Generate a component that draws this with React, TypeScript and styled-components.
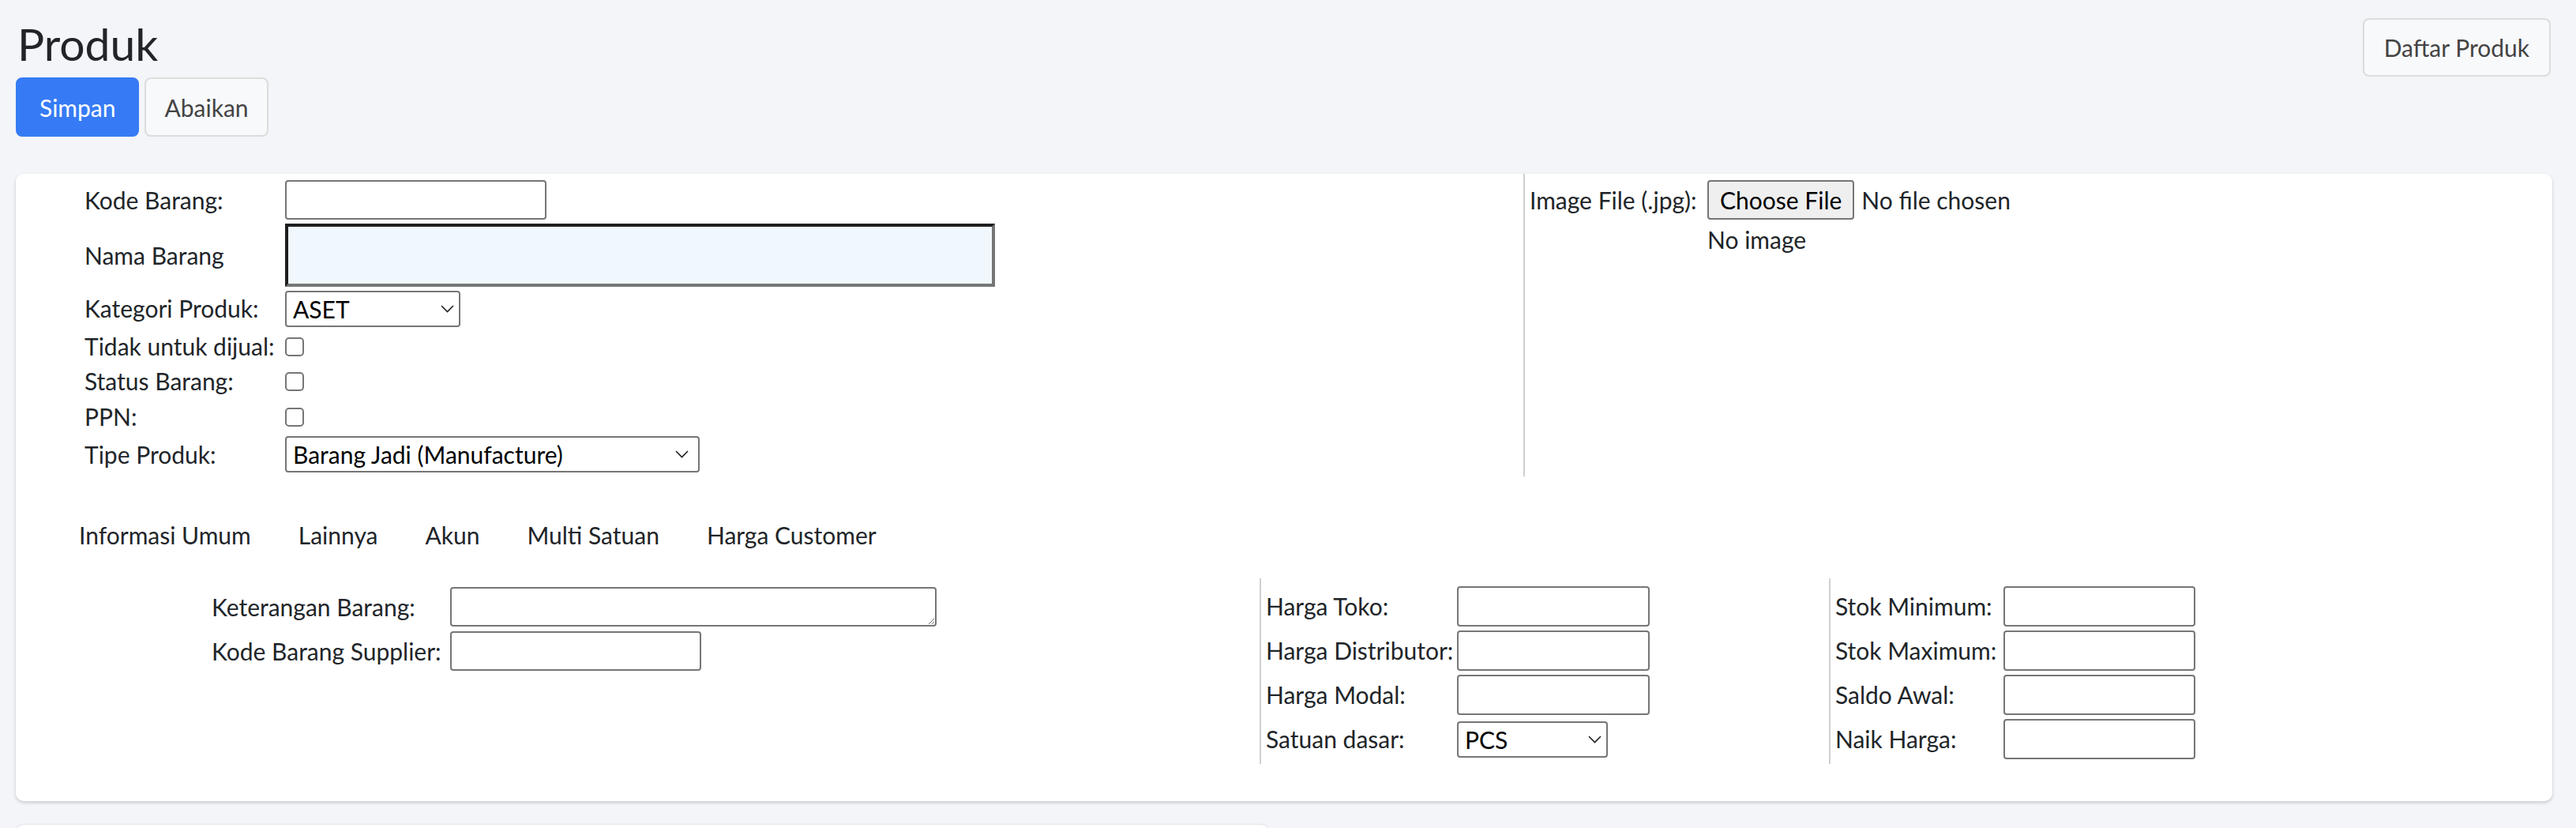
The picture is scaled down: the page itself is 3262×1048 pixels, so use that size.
import * as React from 'react';
import styled, { createGlobalStyle } from 'styled-components';

const GlobalStyle = createGlobalStyle`
  html, body {
    margin: 0;
    padding: 0;
    background: #f4f5f9;
    font-family: Lato, "Noto Sans", sans-serif;
    font-size: 30px;
    color: #212529;
  }
  * { box-sizing: border-box; }
`;

const Page = styled.div`
  padding: 0 30px 0 20px;
  height: 1048px;
  overflow: hidden;
`;

const Header = styled.div`
  display: flex;
  justify-content: space-between;
  align-items: flex-start;
`;

const Title = styled.h2`
  margin: 20px 0 0 2px;
  font-size: 57px;
  font-weight: 400;
  line-height: 71px;
`;

const ButtonRow = styled.div`
  display: flex;
  gap: 7px;
  margin-top: 7px;
`;

const Btn = styled.button<{ $primary?: boolean }>`
  height: 75px;
  padding: 0 ${ p => p.$primary ? 28 : 23 }px;
  font: inherit;
  border-radius: 8px;
  border: 2px solid ${ p => p.$primary ? '#367bf5' : '#dcdcdc' };
  background: ${ p => p.$primary ? '#367bf5' : '#f8f9fb' };
  color: ${ p => p.$primary ? '#fff' : '#444' };
`;

const TopBtn = styled(Btn)`
  margin: 23px 2px 0 0;
  height: 74px;
  padding: 0 25px;
`;

const Card = styled.div`
  margin-top: 47px;
  background: #fff;
  border-radius: 10px;
  box-shadow: 0 2px 4px rgba(0, 0, 0, 0.18);
  padding-bottom: 47px;
`;

const NextCard = styled.div`
  margin-top: 30px;
  width: 1587px;
  height: 60px;
  background: #fff;
  border-radius: 10px;
  box-shadow: 0 0 3px rgba(0, 0, 0, 0.15);
`;

const TopSection = styled.div`
  display: grid;
  grid-template-columns: 1909px 1fr;
`;

const MainFields = styled.div`
  padding: 5px 0 0 87px;
`;

const ImageFields = styled.div`
  border-left: 2px solid #d0d0d0;
  padding: 5px 0 0 6px;
  height: 383px;
`;

const FormRow = styled.div<{ $label: number; $h: number }>`
  display: grid;
  grid-template-columns: ${ p => p.$label }px 1fr;
  align-items: center;
  height: ${ p => p.$h }px;
  white-space: nowrap;
`;

const Label = styled.span`
  line-height: 45px;
`;

const TextInput = styled.input<{ $w: number; $h?: number }>`
  width: ${ p => p.$w }px;
  height: ${ p => p.$h ?? 50 }px;
  border: 2px solid #767676;
  border-radius: 4px;
  font: inherit;
  background: #fff;
`;

const NameInput = styled.input`
  width: 899px;
  height: 80px;
  border: 4px solid;
  border-color: #1f1f1f #767676 #767676 #1f1f1f;
  background: #f0f7fd;
  font: inherit;
`;

const Check = styled.input`
  appearance: none;
  width: 24px;
  height: 24px;
  margin: 0;
  border: 2px solid #767676;
  border-radius: 5px;
  background: #fff;
`;

const SelectWrap = styled.div<{ $w: number; $h: number }>`
  position: relative;
  width: ${ p => p.$w }px;
  height: ${ p => p.$h }px;

  svg {
    position: absolute;
    right: ${ p => p.$w > 300 ? 14 : 8 }px;
    top: 50%;
    margin-top: -5px;
    pointer-events: none;
  }
`;

const Select = styled.select`
  appearance: none;
  width: 100%;
  height: 100%;
  border: 2px solid #767676;
  border-radius: 4px;
  background: #fff;
  color: #000;
  font: inherit;
  padding: 0 0 0 8px;
`;

const FileBox = styled.div`
  display: flex;
  align-items: center;
  gap: 9px;
`;

const FileButton = styled.button`
  height: 50px;
  padding: 0 14px;
  font: inherit;
  color: #000;
  background: #efefef;
  border: 2px solid #767676;
  border-radius: 4px;
`;

const Tabs = styled.div`
  display: flex;
  margin: 52px 0 0 50px;
`;

const Tab = styled.span`
  padding: 0 30px;
  line-height: 45px;
  color: #212529;
`;

const BottomSection = styled.div`
  display: grid;
  grid-template-columns: 1575px 721px 1fr;
  margin-top: 32px;
`;

const InfoCol = styled.div`
  padding: 11px 0 0 248px;
  display: flex;
  flex-direction: column;
  gap: 6px;
`;

const PriceCol = styled.div`
  border-left: 2px solid #d0d0d0;
  padding: 10px 0 6px 6px;
  display: flex;
  flex-direction: column;
  gap: 5px;
`;

const TextArea = styled.textarea`
  width: 616px;
  height: 50px;
  border: 2px solid #767676;
  border-radius: 4px;
  font: inherit;
  display: block;
`;

const Chevron = () => (
    <svg width="17" height="10" viewBox="0 0 17 10">
        <path d="M1 1 L8.5 8.5 L16 1" fill="none" stroke="#222" strokeWidth="1.6"/>
    </svg>
);

const Dropdown = ( { w, h, value }: { w: number; h: number; value: string } ) => (
    <SelectWrap $w={ w } $h={ h }>
        <Select defaultValue={ value }>
            <option>{ value }</option>
        </Select>
        <Chevron/>
    </SelectWrap>
);

const tabs = [ 'Informasi Umum', 'Lainnya', 'Akun', 'Multi Satuan', 'Harga Customer' ];

const App = () => (
    <Page>
        <GlobalStyle/>
        <Header>
            <div>
                <Title>Produk</Title>
                <ButtonRow>
                    <Btn $primary>Simpan</Btn>
                    <Btn>Abaikan</Btn>
                </ButtonRow>
            </div>
            <TopBtn>Daftar Produk</TopBtn>
        </Header>

        <Card>
            <TopSection>
                <MainFields>
                    <FormRow $label={ 254 } $h={ 56 }>
                        <Label>Kode Barang:</Label>
                        <TextInput $w={ 331 }/>
                    </FormRow>
                    <FormRow $label={ 254 } $h={ 84 }>
                        <Label>Nama Barang</Label>
                        <NameInput/>
                    </FormRow>
                    <FormRow $label={ 254 } $h={ 51 }>
                        <Label>Kategori Produk:</Label>
                        <Dropdown w={ 222 } h={ 46 } value="ASET"/>
                    </FormRow>
                    <FormRow $label={ 254 } $h={ 44 }>
                        <Label>Tidak untuk dijual:</Label>
                        <Check type="checkbox"/>
                    </FormRow>
                    <FormRow $label={ 254 } $h={ 45 }>
                        <Label>Status Barang:</Label>
                        <Check type="checkbox"/>
                    </FormRow>
                    <FormRow $label={ 254 } $h={ 44 }>
                        <Label>PPN:</Label>
                        <Check type="checkbox"/>
                    </FormRow>
                    <FormRow $label={ 254 } $h={ 52 }>
                        <Label>Tipe Produk:</Label>
                        <Dropdown w={ 525 } h={ 46 } value="Barang Jadi (Manufacture)"/>
                    </FormRow>
                </MainFields>
                <ImageFields>
                    <FormRow $label={ 225 } $h={ 56 }>
                        <Label>Image File (.jpg):</Label>
                        <FileBox>
                            <FileButton>Choose File</FileButton>
                            <span>No file chosen</span>
                        </FileBox>
                    </FormRow>
                    <FormRow $label={ 225 } $h={ 40 }>
                        <span/>
                        <Label>No image</Label>
                    </FormRow>
                </ImageFields>
            </TopSection>

            <Tabs>
                { tabs.map( t => <Tab key={ t }>{ t }</Tab> ) }
            </Tabs>

            <BottomSection>
                <InfoCol>
                    <FormRow $label={ 302 } $h={ 50 }>
                        <Label>Keterangan Barang:</Label>
                        <TextArea/>
                    </FormRow>
                    <FormRow $label={ 302 } $h={ 50 }>
                        <Label>Kode Barang Supplier:</Label>
                        <TextInput $w={ 318 }/>
                    </FormRow>
                </InfoCol>
                <PriceCol>
                    <FormRow $label={ 242 } $h={ 51 }>
                        <Label>Harga Toko:</Label>
                        <TextInput $w={ 244 } $h={ 51 }/>
                    </FormRow>
                    <FormRow $label={ 242 } $h={ 51 }>
                        <Label>Harga Distributor:</Label>
                        <TextInput $w={ 244 } $h={ 51 }/>
                    </FormRow>
                    <FormRow $label={ 242 } $h={ 51 }>
                        <Label>Harga Modal:</Label>
                        <TextInput $w={ 244 } $h={ 51 }/>
                    </FormRow>
                    <FormRow $label={ 242 } $h={ 51 }>
                        <Label>Satuan dasar:</Label>
                        <Dropdown w={ 191 } h={ 46 } value="PCS"/>
                    </FormRow>
                </PriceCol>
                <PriceCol>
                    <FormRow $label={ 213 } $h={ 51 }>
                        <Label>Stok Minimum:</Label>
                        <TextInput $w={ 243 } $h={ 51 }/>
                    </FormRow>
                    <FormRow $label={ 213 } $h={ 51 }>
                        <Label>Stok Maximum:</Label>
                        <TextInput $w={ 243 } $h={ 51 }/>
                    </FormRow>
                    <FormRow $label={ 213 } $h={ 51 }>
                        <Label>Saldo Awal:</Label>
                        <TextInput $w={ 243 } $h={ 51 }/>
                    </FormRow>
                    <FormRow $label={ 213 } $h={ 51 }>
                        <Label>Naik Harga:</Label>
                        <TextInput $w={ 243 } $h={ 51 }/>
                    </FormRow>
                </PriceCol>
            </BottomSection>
        </Card>
        <NextCard/>
    </Page>
);

export default App;
